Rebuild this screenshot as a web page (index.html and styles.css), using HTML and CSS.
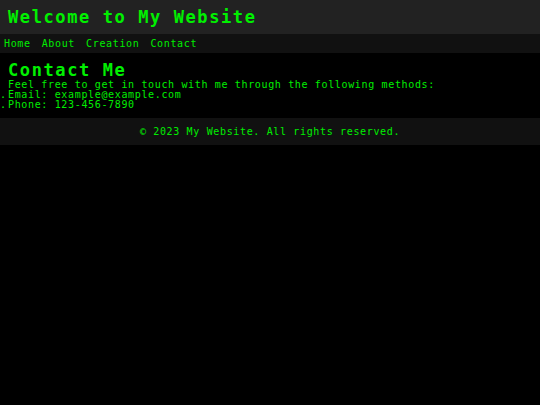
FILE: index.html
```html
<!DOCTYPE html>
<html>
<head>
<meta charset="utf-8">
<title>Contact Me</title>
<link rel="stylesheet" href="styles.css">
</head>
<body>
<header class="site-header">
  <h1 class="site-title">Welcome to My Website</h1>
</header>
<nav class="site-nav">
  <a href="#" class="nav-link">Home</a>
  <a href="#" class="nav-link">About</a>
  <a href="#" class="nav-link">Creation</a>
  <a href="#" class="nav-link">Contact</a>
</nav>
<main class="content">
  <h2 class="page-title">Contact Me</h2>
  <p class="intro">Feel free to get in touch with me through the following methods:</p>
  <ul class="contact-list">
    <li class="contact-item">Email: example@example.com</li>
    <li class="contact-item">Phone: 123-456-7890</li>
  </ul>
</main>
<footer class="site-footer">
  <p class="footer-text">© 2023 My Website. All rights reserved.</p>
</footer>
</body>
</html>
```

FILE: styles.css
```css
html, body {
  margin: 0;
  padding: 0;
  background: #000;
}
body {
  font-family: "DejaVu Sans Mono", "Liberation Mono", monospace;
  color: #00ee00;
  font-size: 10px;
  letter-spacing: 0.65px;
}
.site-header {
  background: #222;
  height: 34px;
  padding: 0 8px;
  display: flex;
  align-items: center;
}
.site-title {
  margin: 0;
  font-size: 17px;
  letter-spacing: 1.6px;
  font-weight: bold;
  line-height: 20px;
  color: #00f000;
}
.site-nav {
  background: #111;
  height: 19px;
  padding: 0 4px;
  display: flex;
  align-items: center;
  gap: 11px;
}
.nav-link {
  color: #00ee00;
  text-decoration: none;
  line-height: 12px;
}
.content {
  padding: 7px 8px 8px;
}
.page-title {
  margin: 0;
  font-size: 17px;
  letter-spacing: 1.6px;
  font-weight: bold;
  line-height: 20px;
  color: #00f000;
}
.intro {
  margin: 0;
  line-height: 10px;
}
.contact-list {
  margin: 0;
  padding: 0;
  list-style: none;
  line-height: 10px;
}
.contact-item::before {
  content: ".";
  display: inline-block;
  width: 8px;
  margin-left: -8px;
  letter-spacing: 0;
  text-align: left;
}
.site-footer {
  background: #111;
  height: 27px;
  display: flex;
  align-items: center;
  justify-content: center;
}
.footer-text {
  margin: 0;
  line-height: 12px;
}
```
